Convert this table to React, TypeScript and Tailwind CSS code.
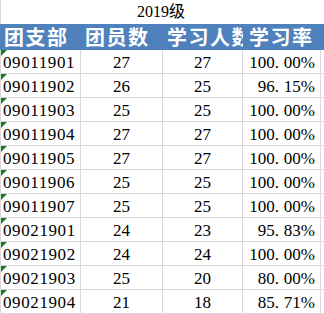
import React from "react";

const rows = [
  ["09011901", "27", "27", "100.00%"],
  ["09011902", "26", "25", "96.15%"],
  ["09011903", "25", "25", "100.00%"],
  ["09011904", "27", "27", "100.00%"],
  ["09011905", "27", "27", "100.00%"],
  ["09011906", "25", "25", "100.00%"],
  ["09011907", "25", "25", "100.00%"],
  ["09021901", "24", "23", "95.83%"],
  ["09021902", "24", "24", "100.00%"],
  ["09021903", "25", "20", "80.00%"],
  ["09021904", "21", "18", "85.71%"],
];

const headers = ["团支部", "团员数", "学习人数", "学习率"];

// SimSun-style wide period
const Pct = ({ v }: { v: string }) => {
  const [a, b] = v.split(".");
  return (
    <span>
      {a}
      <span className="inline-block w-[9px]">.</span>
      {b}
    </span>
  );
};

export default function App() {
  return (
    <div className="w-[324px] h-[314px] bg-white overflow-hidden font-['Liberation_Serif','Noto_Sans_CJK_SC',serif] text-black">
      <div className="w-[321px] h-[24px] flex items-center justify-center text-[16px] border-l border-[#d9d9d9]">
        2019级
      </div>
      <div className="grid grid-cols-[81px_82px_80px_78px] h-[26px] bg-[#4f81bd] text-white font-['Noto_Sans_CJK_SC',sans-serif] text-[20px] font-semibold leading-[26px]">
        {headers.map((h, i) => (
          <div
            key={i}
            className={`whitespace-nowrap ${i === 2 ? "overflow-x-hidden" : ""} ${i === 3 ? "pl-[6px]" : "pl-[4px]"}`}
          >
            <span className="tracking-[1.5px]">{h}</span>
          </div>
        ))}
      </div>
      {rows.map((r, ri) => (
        <div key={ri} className="grid grid-cols-[81px_82px_80px_78px] h-[24px] text-[17px] border-b border-[#d9d9d9]">
          <div className="relative flex items-center pl-[2px] border-l border-r border-[#d9d9d9] tracking-[0.6px]">
            <div className="absolute left-0 top-0 w-0 h-0 border-t-[6px] border-r-[6px] border-t-[#1e7a1e] border-r-transparent" />
            {r[0]}
          </div>
          <div className="flex items-center justify-center border-r border-[#d9d9d9]">{r[1]}</div>
          <div className="flex items-center justify-center border-r border-[#d9d9d9]">{r[2]}</div>
          <div className="flex items-center justify-end pr-[5px] border-r border-[#d9d9d9]">
            <Pct v={r[3]} />
          </div>
        </div>
      ))}
    </div>
  );
}
